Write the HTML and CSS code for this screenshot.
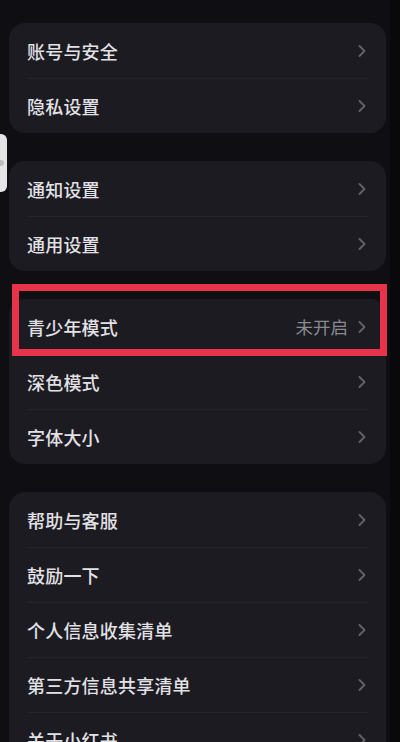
FILE: index.html
```html
<!DOCTYPE html>
<html lang="zh-CN">
<head>
<meta charset="utf-8">
<title>设置</title>
<link rel="stylesheet" href="styles.css">
</head>
<body>
<div class="page">
  <section class="card">
    <div class="row"><span class="label">账号与安全</span><span class="chev"><svg viewBox="0 0 8 12" width="8" height="12"><path d="M1.5 1 L6.5 6 L1.5 11" /></svg></span></div>
    <div class="row"><span class="label">隐私设置</span><span class="chev"><svg viewBox="0 0 8 12" width="8" height="12"><path d="M1.5 1 L6.5 6 L1.5 11" /></svg></span></div>
  </section>
  <section class="card">
    <div class="row"><span class="label">通知设置</span><span class="chev"><svg viewBox="0 0 8 12" width="8" height="12"><path d="M1.5 1 L6.5 6 L1.5 11" /></svg></span></div>
    <div class="row"><span class="label">通用设置</span><span class="chev"><svg viewBox="0 0 8 12" width="8" height="12"><path d="M1.5 1 L6.5 6 L1.5 11" /></svg></span></div>
  </section>
  <section class="card card-mode">
    <div class="row"><span class="label">青少年模式</span><span class="value">未开启</span><span class="chev"><svg viewBox="0 0 8 12" width="8" height="12"><path d="M1.5 1 L6.5 6 L1.5 11" /></svg></span></div>
    <div class="row"><span class="label">深色模式</span><span class="chev"><svg viewBox="0 0 8 12" width="8" height="12"><path d="M1.5 1 L6.5 6 L1.5 11" /></svg></span></div>
    <div class="row"><span class="label">字体大小</span><span class="chev"><svg viewBox="0 0 8 12" width="8" height="12"><path d="M1.5 1 L6.5 6 L1.5 11" /></svg></span></div>
    <div class="highlight"></div>
  </section>
  <section class="card">
    <div class="row"><span class="label">帮助与客服</span><span class="chev"><svg viewBox="0 0 8 12" width="8" height="12"><path d="M1.5 1 L6.5 6 L1.5 11" /></svg></span></div>
    <div class="row"><span class="label">鼓励一下</span><span class="chev"><svg viewBox="0 0 8 12" width="8" height="12"><path d="M1.5 1 L6.5 6 L1.5 11" /></svg></span></div>
    <div class="row"><span class="label">个人信息收集清单</span><span class="chev"><svg viewBox="0 0 8 12" width="8" height="12"><path d="M1.5 1 L6.5 6 L1.5 11" /></svg></span></div>
    <div class="row"><span class="label">第三方信息共享清单</span><span class="chev"><svg viewBox="0 0 8 12" width="8" height="12"><path d="M1.5 1 L6.5 6 L1.5 11" /></svg></span></div>
    <div class="row"><span class="label">关于小红书</span><span class="chev"><svg viewBox="0 0 8 12" width="8" height="12"><path d="M1.5 1 L6.5 6 L1.5 11" /></svg></span></div>
  </section>
</div>
<div class="edge-tab"><span class="edge-dot"></span></div>
<div class="edge-strip"></div>
</body>
</html>
```

FILE: styles.css
```css
html, body {
  margin: 0;
  padding: 0;
  height: 742px;
  overflow: hidden;
  background: #0f0e12;
  font-family: "Noto Sans CJK SC", "Noto Sans", sans-serif;
}

.page {
  display: flex;
  flex-direction: column;
  gap: 28px;
  padding: 23px 14px 0 9px;
}

.card {
  background: #1c1b21;
  border-radius: 16px;
  position: relative;
}

.row {
  height: 55px;
  margin: 0 18px;
  display: flex;
  align-items: center;
  box-sizing: border-box;
}

.row + .row {
  border-top: 1px solid #25242a;
}

.label {
  flex: 1;
  color: #e2e1e6;
  font-size: 18px;
  font-weight: 500;
  line-height: 1;
  letter-spacing: 0.2px;
}

.value {
  color: #8a898f;
  font-size: 17.5px;
  line-height: 1;
  margin-right: 10px;
}

.chev {
  display: flex;
  align-items: center;
  padding-right: 2px;
}

.chev svg path {
  fill: none;
  stroke: #64636c;
  stroke-width: 1.8;
  stroke-linecap: round;
  stroke-linejoin: round;
}

.highlight {
  position: absolute;
  left: 3px;
  right: -1px;
  top: -15px;
  height: 72px;
  box-sizing: border-box;
  border: 7px solid #e8344a;
  pointer-events: none;
}

.edge-tab {
  position: absolute;
  left: 0;
  top: 134px;
  width: 7px;
  height: 58px;
  background: #e4e4e6;
  border-radius: 0 6px 6px 0;
  display: flex;
  align-items: center;
}

.edge-dot {
  width: 4px;
  height: 6px;
  border-radius: 0 3px 3px 0;
  background: #bdbdc0;
}

.edge-strip {
  position: absolute;
  right: 0;
  top: 0;
  width: 10px;
  height: 742px;
  background: #09090b;
}
```
